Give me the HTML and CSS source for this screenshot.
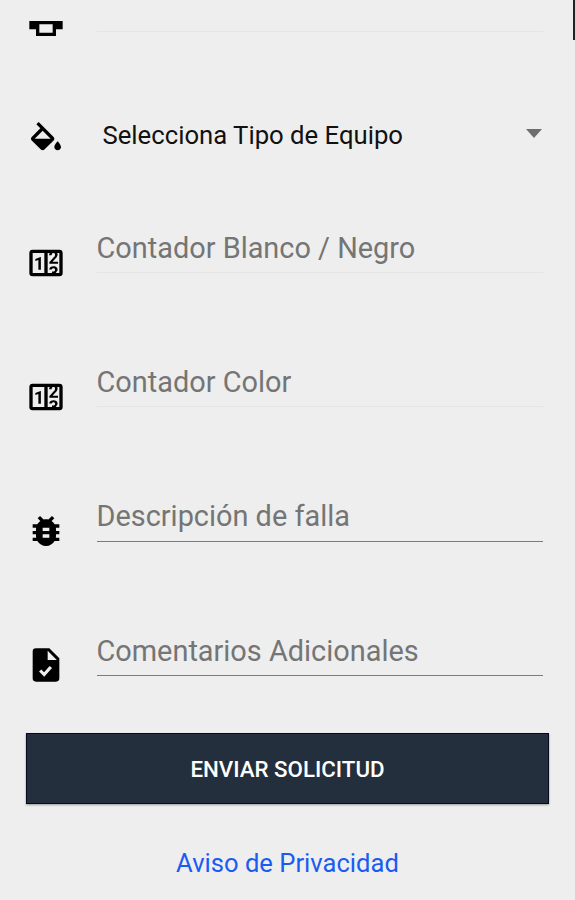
FILE: index.html
```
<!DOCTYPE html>
<html lang="es">

<head>
    <meta charset="UTF-8">
    <title>Solicitud</title>

    <link rel="stylesheet" href="styles.css">
</head>

<body>

    <div class="scrollbar"></div>

    <form>
        <div class="row first">
            <svg class="icon" viewBox="0 0 24 24">
                <path fill-rule="evenodd" d="M2 12h20v5h-4v4H6v-4H2zM8 14v5h8v-5z" />
            </svg>
            <div class="field"></div>
        </div>

        <div class="row select">
            <svg class="icon" viewBox="0 0 24 24">
                <path d="M16.56 8.94L7.62 0 6.21 1.41l2.38 2.38-5.15 5.15c-.59.59-.59 1.54 0 2.12l5.5 5.5c.29.29.68.44 1.06.44s.77-.15 1.06-.44l5.5-5.5c.59-.58.59-1.53 0-2.12zM5.21 10L10 5.21 14.79 10H5.21zM19 11.5s-2 2.17-2 3.5c0 1.1.9 2 2 2s2-.9 2-2c0-1.33-2-3.5-2-3.5z" />
            </svg>
            <div class="option">
                <span>Selecciona Tipo de Equipo</span>
                <svg class="arrow" viewBox="0 0 16 9">
                    <path d="M0 0h16L8 9z" />
                </svg>
            </div>
        </div>

        <div class="row">
            <svg class="icon" viewBox="0 0 24 24">
                <path d="M4,4H20A2,2 0 0,1 22,6V18A2,2 0 0,1 20,20H4A2,2 0 0,1 2,18V6A2,2 0 0,1 4,4M4,6V18H11V6H4M20,18V6H18.76C19,6.54 18.95,7.07 18.95,7.13C18.88,7.8 18.41,8.5 18.24,8.75L15.91,11.3L19.23,11.28L19.24,12.5L14.04,12.47L14,11.47C14,11.47 17.05,8.24 17.2,7.95C17.34,7.67 17.91,6 16.5,6C15.27,6.05 15.41,7.3 15.41,7.3L13.87,7.31C13.87,7.31 13.88,6.65 14.25,6H13V18H15.58L15.57,17.14L16.54,17.13C16.54,17.13 17.45,16.97 17.46,16.08C17.5,15.08 16.65,15.08 16.5,15.08C16.37,15.08 15.43,15.13 15.43,15.95H13.91C13.91,15.95 13.95,13.89 16.5,13.89C19.1,13.89 18.96,15.91 18.96,15.91C18.96,15.91 19,17.16 17.85,17.63L18.37,18H20M8.92,16H7.42V10.2L5.62,10.76V9.53L8.76,8.41H8.92V16Z" />
            </svg>
            <div class="field"><span>Contador Blanco / Negro</span></div>
        </div>

        <div class="row">
            <svg class="icon" viewBox="0 0 24 24">
                <path d="M4,4H20A2,2 0 0,1 22,6V18A2,2 0 0,1 20,20H4A2,2 0 0,1 2,18V6A2,2 0 0,1 4,4M4,6V18H11V6H4M20,18V6H18.76C19,6.54 18.95,7.07 18.95,7.13C18.88,7.8 18.41,8.5 18.24,8.75L15.91,11.3L19.23,11.28L19.24,12.5L14.04,12.47L14,11.47C14,11.47 17.05,8.24 17.2,7.95C17.34,7.67 17.91,6 16.5,6C15.27,6.05 15.41,7.3 15.41,7.3L13.87,7.31C13.87,7.31 13.88,6.65 14.25,6H13V18H15.58L15.57,17.14L16.54,17.13C16.54,17.13 17.45,16.97 17.46,16.08C17.5,15.08 16.65,15.08 16.5,15.08C16.37,15.08 15.43,15.13 15.43,15.95H13.91C13.91,15.95 13.95,13.89 16.5,13.89C19.1,13.89 18.96,15.91 18.96,15.91C18.96,15.91 19,17.16 17.85,17.63L18.37,18H20M8.92,16H7.42V10.2L5.62,10.76V9.53L8.76,8.41H8.92V16Z" />
            </svg>
            <div class="field"><span>Contador Color</span></div>
        </div>

        <div class="row">
            <svg class="icon" viewBox="0 0 24 24">
                <path d="M20 8h-2.81c-.45-.78-1.07-1.45-1.82-1.96L17 4.41 15.59 3l-2.17 2.17C12.96 5.06 12.49 5 12 5c-.49 0-.96.06-1.41.17L8.41 3 7 4.41l1.62 1.63C7.88 6.55 7.26 7.22 6.81 8H4v2h2.09c-.05.33-.09.66-.09 1v1H4v2h2v1c0 .34.04.67.09 1H4v2h2.81c1.04 1.79 2.97 3 5.19 3s4.15-1.21 5.19-3H20v-2h-2.09c.05-.33.09-.66.09-1v-1h2v-2h-2v-1c0-.34-.04-.67-.09-1H20V8zm-6 8h-4v-2h4v2zm0-4h-4v-2h4v2z" />
            </svg>
            <div class="field dark"><span>Descripción de falla</span></div>
        </div>

        <div class="row">
            <svg class="icon" viewBox="0 0 24 24">
                <path fill-rule="evenodd" d="M14 2H6a2 2 0 0 0-2 2v16a2 2 0 0 0 2 2h12a2 2 0 0 0 2-2V8zM13 9V3.5L18.5 9z" />
                <path class="check" d="M8.5 15.3l2.4 2.4 4-4.5" />
            </svg>
            <div class="field dark"><span>Comentarios Adicionales</span></div>
        </div>

        <button type="button">ENVIAR SOLICITUD</button>
    </form>

    <a href="#">Aviso de Privacidad</a>

</body>

</html>
```
FILE: styles.css
```
body {
    margin: 0;
    height: 900px;
    overflow: hidden;
    background-color: #eee;
    font-family: Roboto, sans-serif;
}

.scrollbar {
    position: absolute;
    top: 0;
    right: 0;
    width: 2px;
    height: 40px;
    background-color: #222;
}

.row {
    display: flex;
    align-items: flex-start;
    box-sizing: border-box;
    height: 134.3px;
    padding: 0 32px 0 26px;
}

.icon {
    flex: none;
    width: 40px;
    height: 40px;
    margin: 37.5px 30.5px 0 0;
}

.check {
    fill: none;
    stroke: #eee;
    stroke-width: 1.9;
}

.field {
    flex: 1;
    box-sizing: border-box;
    height: 68px;
    padding-top: 25.8px;
    border-bottom: 1px solid #e5e5e5;
    color: #757575;
    font-size: 28.9px;
    line-height: 34px;
    white-space: nowrap;
}

.dark {
    border-bottom: 1px solid #7c7c7c;
}

.first {
    height: 85px;
}

.first .icon {
    margin-top: 1px;
}

.first .field {
    height: 31.5px;
    padding: 0;
}

.select {
    height: 120px;
}

.select .icon {
    margin-top: 37px;
}

.option {
    flex: 1;
    display: flex;
    align-items: center;
    justify-content: space-between;
    height: 40px;
    margin-top: 30px;
    padding: 0 1px 0 6px;
    color: #111;
    font-size: 25.7px;
}

.arrow {
    width: 16px;
    height: 9px;
    margin-bottom: 3px;
    fill: #6d6d6d;
}

button {
    display: block;
    width: 523px;
    height: 71px;
    margin: -9px 0 0 26px;
    border: 1px solid #06091f;
    background-color: #232f3c;
    box-shadow: 0 1px 2px #999;
    color: #fff;
    font-family: Roboto, sans-serif;
    font-size: 22.3px;
    font-weight: 500;
}

a {
    display: block;
    margin-top: 43px;
    color: #1a5cf0;
    font-size: 25.6px;
    line-height: 32px;
    text-align: center;
    text-decoration: none;
}
```
